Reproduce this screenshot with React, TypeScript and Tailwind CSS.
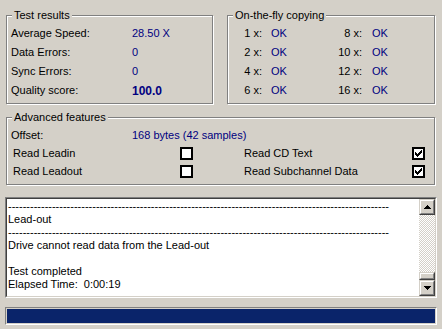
const NAVY = "text-[#000080]";

const CHECK_PIXELS = [
  "......X",
  ".....XX",
  "X...XXX",
  "XX.XXX.",
  "XXXXX..",
  ".XXX...",
  "..X....",
];

function GroupBox({
  title,
  className,
  children,
}: {
  title: string;
  className: string;
  children: React.ReactNode;
}) {
  return (
    <div
      className={`relative border border-[#808080] shadow-[inset_1px_1px_0_#fff,1px_1px_0_#fff] ${className}`}
    >
      <span className="absolute -top-[7px] left-[5px] bg-[#d4d0c8] px-[2px] leading-[13px] text-black">
        {title}
      </span>
      {children}
    </div>
  );
}

function CheckBox({ checked }: { checked: boolean }) {
  return (
    <span className="flex h-[13px] w-[13px] items-center justify-center border-2 border-black bg-white">
      {checked && (
        <svg width="7" height="7" viewBox="0 0 7 7" shapeRendering="crispEdges">
          {CHECK_PIXELS.flatMap((row, y) =>
            row.split("").map((c, x) =>
              c === "X" ? <rect key={`${x}-${y}`} x={x} y={y} width="1" height="1" fill="#000" /> : null,
            ),
          )}
        </svg>
      )}
    </span>
  );
}

function Raised({ className, children }: { className: string; children?: React.ReactNode }) {
  return (
    <div
      className={`border border-t-[#d4d0c8] border-l-[#d4d0c8] border-b-[#404040] border-r-[#404040] bg-[#d4d0c8] ${className}`}
    >
      <div className="flex h-full w-full items-center justify-center border border-t-white border-l-white border-b-[#808080] border-r-[#808080]">
        {children}
      </div>
    </div>
  );
}

function Arrow({ down }: { down?: boolean }) {
  return (
    <svg width="7" height="4" viewBox="0 0 7 4" shapeRendering="crispEdges">
      <path d={down ? "M0 0H7L3.5 4Z" : "M3.5 0L7 4H0Z"} fill="#000" />
    </svg>
  );
}

const dashes = "-".repeat(104);

const LOG_LINES = [
  dashes,
  "Lead-out",
  dashes,
  "Drive cannot read data from the Lead-out",
  "",
  "Test completed",
  "Elapsed Time:  0:00:19",
];

const COPY_ROWS = [
  ["1 x:", "8 x:"],
  ["2 x:", "10 x:"],
  ["4 x:", "12 x:"],
  ["6 x:", "16 x:"],
];

export default function App() {
  return (
    <div className="h-[329px] w-[442px] overflow-hidden bg-[#d4d0c8] pl-[6px] pt-[15px] font-['Liberation_Sans',Arial,sans-serif] text-[11px] text-black">
      <div className="flex">
        <GroupBox title="Test results" className="h-[89px] w-[207px] pl-[4px] pt-[8px]">
          {[
            ["Average Speed:", "28.50 X", false],
            ["Data Errors:", "0", false],
            ["Sync Errors:", "0", false],
            ["Quality score:", "100.0", true],
          ].map(([label, value, bold]) => (
            <div key={label as string} className="flex h-[19px] items-center">
              <span className="w-[121px]">{label}</span>
              <span className={`${NAVY} ${bold ? "text-[12px] font-bold" : ""}`}>{value}</span>
            </div>
          ))}
        </GroupBox>

        <GroupBox title="On-the-fly copying" className="ml-[14px] h-[89px] w-[208px] pt-[8px]">
          {COPY_ROWS.map(([a, b]) => (
            <div key={a} className="flex h-[19px] items-center">
              <span className="w-[34px] text-right">{a}</span>
              <span className={`ml-[9px] w-[46px] ${NAVY}`}>OK</span>
              <span className="w-[45px] text-right">{b}</span>
              <span className={`ml-[10px] ${NAVY}`}>OK</span>
            </div>
          ))}
        </GroupBox>
      </div>

      <GroupBox title="Advanced features" className="mt-[13px] h-[68px] w-[429px] pt-[8px]">
        <div className="flex h-[18px] items-center pl-[4px]">
          <span className="w-[121px]">Offset:</span>
          <span className={NAVY}>168 bytes (42 samples)</span>
        </div>
        {[
          ["Read Leadin", false, "Read CD Text", true],
          ["Read Leadout", false, "Read Subchannel Data", true],
        ].map(([l1, c1, l2, c2]) => (
          <div key={l1 as string} className="flex h-[18px] items-center pl-[6px]">
            <span className="w-[167px]">{l1}</span>
            <CheckBox checked={c1 as boolean} />
            <span className="ml-[51px] w-[168px]">{l2}</span>
            <CheckBox checked={c2 as boolean} />
          </div>
        ))}
      </GroupBox>

      <div className="-ml-[1px] mt-[12px] h-[101px] w-[432px] border border-t-[#808080] border-l-[#808080] border-b-white border-r-white">
        <div className="flex h-full border border-t-[#404040] border-l-[#404040] border-b-[#d4d0c8] border-r-[#d4d0c8] bg-white">
          <div className="flex-1 overflow-hidden pl-[1px] pt-[1px]">
            {LOG_LINES.map((line, i) => (
              <div key={i} className="h-[13px] whitespace-pre leading-[13px]">
                {line}
              </div>
            ))}
          </div>
          <div className="flex w-[16px] flex-col">
            <Raised className="h-[16px] w-[16px]">
              <Arrow />
            </Raised>
            <div className="flex-1 bg-[image:repeating-conic-gradient(#d4d0c8_0_25%,#fff_0_50%)] bg-[length:2px_2px]" />
            <Raised className="h-[8px] w-[16px]" />
            <Raised className="h-[16px] w-[16px]">
              <Arrow down />
            </Raised>
          </div>
        </div>
      </div>

      <div className="-ml-[1px] mt-[9px] h-[18px] w-[432px] border border-t-[#808080] border-l-[#808080] border-b-white border-r-white p-[1px]">
        <div className="h-full w-full bg-[#0a246a]" />
      </div>
    </div>
  );
}
